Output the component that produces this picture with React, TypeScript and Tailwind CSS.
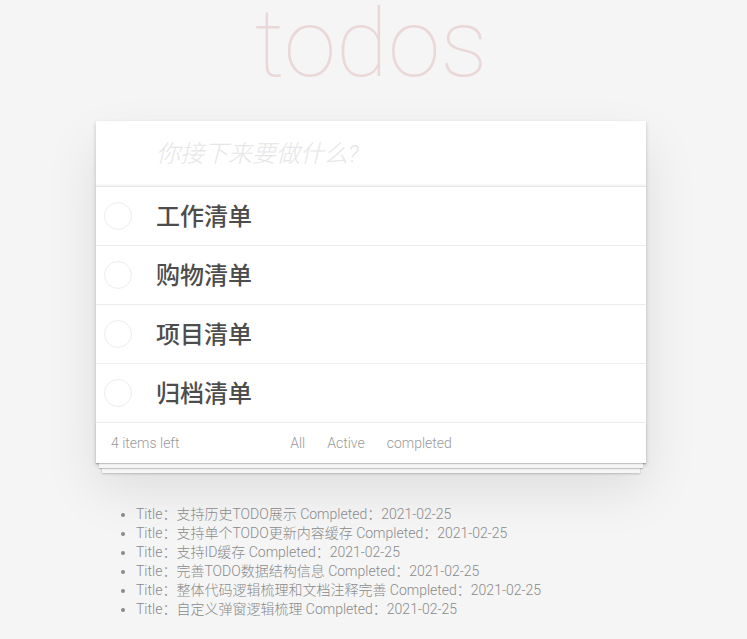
import React from "react";

const todos = ["工作清单", "购物清单", "项目清单", "归档清单"];

const history = [
  "支持历史TODO展示",
  "支持单个TODO更新内容缓存",
  "支持ID缓存",
  "完善TODO数据结构信息",
  "整体代码逻辑梳理和文档注释完善",
  "自定义弹窗逻辑梳理",
];

const sans = "font-['Roboto','Noto_Sans_CJK_SC',sans-serif]";

export default function App() {
  return (
    <div className={`min-h-screen bg-[#f5f5f5] ${sans} font-light`}>
      <div className="flex justify-center pr-[5px]">
        <section className="w-[550px]">
          {/* Title */}
          <h1 className="h-[88px] text-center text-[95px] leading-[88px] font-thin text-[rgba(175,47,47,0.15)]">
            todos
          </h1>

          {/* App */}
          <div className="mt-[33px] bg-white shadow-[0_2px_4px_0_rgba(0,0,0,0.2),0_25px_50px_0_rgba(0,0,0,0.1)]">
            <div className="h-[65px] flex items-center pl-[60px] pr-4 shadow-[inset_0_-2px_1px_rgba(0,0,0,0.03)]">
              <input
                className="w-full bg-transparent text-[24px] italic font-light text-[#4d4d4d] placeholder:text-[#e6e6e6] outline-none"
                placeholder="你接下来要做什么?"
              />
            </div>

            <ul className="border-t border-[#e6e6e6]">
              {todos.map((t) => (
                <li
                  key={t}
                  className="h-[59px] flex items-center border-b border-[#ededed]"
                >
                  <div className="w-[60px] flex items-center pl-[8px]">
                    <span className="w-[28px] h-[28px] rounded-full border border-[#ededed]" />
                  </div>
                  <span className="pt-[2px] text-[24px] font-medium text-[#4d4d4d]">{t}</span>
                </li>
              ))}
            </ul>

            {/* Footer */}
            <footer className="h-[40px] grid grid-cols-[1fr_auto_1fr] items-center px-[15px] text-[14px] text-[#9a9a9a] shadow-[0_1px_1px_rgba(0,0,0,0.2),0_8px_0_-3px_#f6f6f6,0_9px_1px_-3px_rgba(0,0,0,0.2),0_16px_0_-6px_#f6f6f6,0_17px_2px_-6px_rgba(0,0,0,0.2)]">
              <span>4 items left</span>
              <div className="flex">
                <a className="mx-[3px] px-[7px] py-[3px] border border-transparent">All</a>
                <a className="mx-[3px] px-[7px] py-[3px] border border-transparent">Active</a>
                <a className="mx-[3px] px-[7px] py-[3px] border border-transparent">completed</a>
              </div>
              <span />
            </footer>
          </div>

          {/* History */}
          <ul className="mt-[42px] pl-10 list-disc text-[14px] leading-[19px] text-[#8a8a8a]">
            {history.map((h) => (
              <li key={h}>
                Title：{h} Completed：2021-02-25
              </li>
            ))}
          </ul>
        </section>
      </div>
    </div>
  );
}
